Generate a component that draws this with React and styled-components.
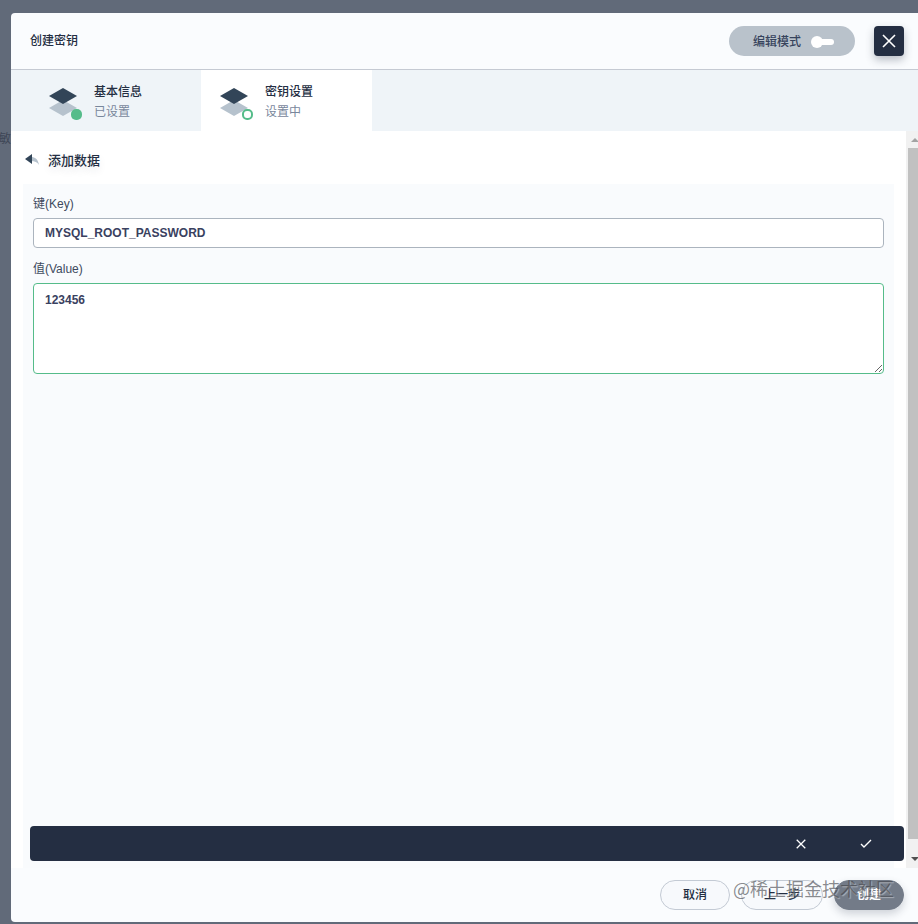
import React, { useState } from 'react';

// STYLE
import styled, { createGlobalStyle } from 'styled-components';

const GlobalStyle = createGlobalStyle`
    * {
        box-sizing: border-box;
    }
    body {
        margin: 0;
        background-color: #616a79;
        color: #242e42;
        font-family: 'Liberation Sans', 'Noto Sans CJK SC', sans-serif;
        font-size: 12px;
        line-height: 20px;
    }
    button,
    input,
    textarea {
        font: inherit;
        color: inherit;
    }
    button {
        padding: 0;
        border: none;
        cursor: pointer;
    }
    svg {
        display: block;
        flex-shrink: 0;
    }
`;

const Backdrop = styled.div`
    position: relative;
    display: flex;
    min-height: 100vh;
    padding: 13px 0 2px 11px;
    overflow: hidden;
`;

const BehindText = styled.span`
    position: absolute;
    top: 129px;
    left: -1px;
    color: #3e4656;
`;

const Modal = styled.div`
    position: relative;
    flex: 1;
    display: flex;
    flex-direction: column;
    min-width: 0;
    background-color: #fafcfe;
    border-radius: 4px 0 0 4px;
    overflow: hidden;
`;

const Header = styled.header`
    display: flex;
    align-items: center;
    height: 57px;
    padding: 0 14px 0 19px;
    border-bottom: 1px solid #c5cad3;
    h1 {
        flex: 1;
        margin: 0;
        font-size: 12px;
        font-weight: 500;
    }
`;

const ModeSwitch = styled.button`
    display: flex;
    align-items: center;
    gap: 10px;
    width: 126px;
    height: 30px;
    margin-right: 19px;
    padding: 1px 0 0 24px;
    border-radius: 15px;
    background-color: #b9c2cb;
    color: #36435c;
    font-weight: 500;
`;

const CloseButton = styled.button`
    display: flex;
    align-items: center;
    justify-content: center;
    width: 30px;
    height: 30px;
    border-radius: 4px;
    background-color: #242e42;
    box-shadow: 0 4px 8px rgba(36, 46, 66, 0.3);
`;

const Tabs = styled.nav`
    display: flex;
    height: 61px;
    padding-left: 19px;
    background-color: #eff4f8;
`;

const Tab = styled.button`
    display: flex;
    align-items: center;
    gap: 11px;
    width: 171px;
    padding: 2px 0 0 19px;
    background-color: ${({ $active }) => ($active ? '#ffffff' : 'transparent')};
    text-align: left;
    strong,
    small {
        display: block;
        font-size: 12px;
    }
    strong {
        font-weight: 500;
    }
    small {
        color: #79879c;
    }
`;

const Body = styled.div`
    flex: 1;
    display: flex;
    min-height: 0;
`;

const Content = styled.main`
    position: relative;
    flex: 1;
    display: flex;
    flex-direction: column;
    min-width: 0;
    padding: 0 12px;
    background-color: #ffffff;
`;

const SubHeader = styled.div`
    display: flex;
    align-items: center;
    gap: 9px;
    height: 53px;
    padding: 7px 0 0 2px;
    h2 {
        margin: 0;
        font-size: 13px;
        font-weight: 500;
        text-shadow: 0 4px 8px rgba(36, 46, 66, 0.1);
    }
`;

const BackButton = styled.button`
    background: none;
`;

const Form = styled.form`
    flex: 1;
    padding: 10px 10px 52px;
    background-color: #f9fbfd;
`;

const Field = styled.div`
    margin-bottom: 11px;
    label {
        display: block;
        height: 24px;
        color: #404a5e;
    }
    input,
    textarea {
        display: block;
        width: 100%;
        border-radius: 4px;
        outline: none;
        background-color: #ffffff;
        color: #3a4160;
        font-weight: 700;
    }
    input {
        height: 30px;
        padding: 0 11px;
        border: 1px solid #abb4be;
    }
    textarea {
        height: 91px;
        padding: 6px 11px;
        border: 1px solid #55bc8a;
        resize: vertical;
    }
`;

const ConfirmBar = styled.div`
    position: absolute;
    right: 2px;
    bottom: 7px;
    left: 19px;
    display: flex;
    align-items: center;
    justify-content: flex-end;
    gap: 52px;
    height: 35px;
    padding-right: 30px;
    border-radius: 4px;
    background-color: #242e42;
    button {
        background: none;
    }
`;

const ScrollTrack = styled.div`
    display: flex;
    flex-direction: column;
    width: 12px;
    padding-left: 2px;
    overflow: hidden;
    background-color: #f1f1f1;
`;

const ScrollThumb = styled.div`
    flex: 1;
    width: 17px;
    background-color: #c1c1c1;
`;

const ScrollEnd = styled.div`
    height: 12px;
`;

const Footer = styled.footer`
    position: relative;
    display: flex;
    align-items: center;
    justify-content: flex-end;
    gap: 11px;
    height: 54px;
    padding-right: 14px;
`;

const FooterButton = styled.button`
    min-width: 70px;
    height: 30px;
    padding: 0 22px;
    border: 1px solid ${({ $primary }) => ($primary ? '#737b88' : '#c3cad4')};
    border-radius: 15px;
    background-color: ${({ $primary }) => ($primary ? '#737b88' : '#f7f9fc')};
    box-shadow: ${({ $primary }) =>
        $primary ? '0 4px 8px rgba(36, 46, 66, 0.2)' : 'none'};
    color: ${({ $primary }) => ($primary ? '#ffffff' : '#242e42')};
    font-weight: ${({ $primary }) => ($primary ? 700 : 500)};
`;

const Watermark = styled.span`
    position: absolute;
    top: 8px;
    right: 24px;
    color: rgba(60, 62, 68, 0.6);
    font-family: 'Noto Sans CJK SC', sans-serif;
    font-size: 18px;
    line-height: 24px;
    text-shadow: 1px 1px 1px rgba(255, 255, 255, 0.4);
    pointer-events: none;
`;

const LayersIcon = ({ done }) => (
    <svg width="34" height="36" viewBox="0 0 34 36" aria-hidden="true">
        <path d="M14 16 28 24 14 32 0 24Z" fill="#b6c2cd" />
        <path d="M14 4 28 12 14 20 0 12Z" fill="#324558" />
        {done ? (
            <rect x="22" y="25" width="11" height="11" rx="5" fill="#55bc8a" />
        ) : (
            <rect
                x="23"
                y="26"
                width="9"
                height="9"
                rx="4"
                fill="#ffffff"
                stroke="#55bc8a"
                strokeWidth="2"
            />
        )}
    </svg>
);

const CrossIcon = ({ size, strokeWidth }) => (
    <svg width={size} height={size} viewBox="0 0 14 14" aria-hidden="true">
        <path
            d="M1 1 13 13M13 1 1 13"
            fill="none"
            stroke="#ffffff"
            strokeWidth={strokeWidth}
        />
    </svg>
);

const App = () => {
    const [key, setKey] = useState('MYSQL_ROOT_PASSWORD');
    const [value, setValue] = useState('123456');

    return (
        <>
            <GlobalStyle />
            <Backdrop>
                <BehindText>敏</BehindText>
                <Modal role="dialog" aria-labelledby="modal-title">
                    <Header>
                        <h1 id="modal-title">创建密钥</h1>
                        <ModeSwitch type="button" aria-pressed="false">
                            编辑模式
                            <svg width="24" height="12" viewBox="0 0 24 12" aria-hidden="true">
                                <rect x="6" y="3" width="17" height="6" rx="3" fill="#ffffff" />
                                <circle cx="6" cy="6" r="6" fill="#ffffff" />
                            </svg>
                        </ModeSwitch>
                        <CloseButton type="button" aria-label="关闭">
                            <CrossIcon size={14} strokeWidth={1.6} />
                        </CloseButton>
                    </Header>
                    <Tabs>
                        <Tab type="button">
                            <LayersIcon done />
                            <span>
                                <strong>基本信息</strong>
                                <small>已设置</small>
                            </span>
                        </Tab>
                        <Tab type="button" $active>
                            <LayersIcon />
                            <span>
                                <strong>密钥设置</strong>
                                <small>设置中</small>
                            </span>
                        </Tab>
                    </Tabs>
                    <Body>
                        <Content>
                            <SubHeader>
                                <BackButton type="button" aria-label="返回">
                                    <svg width="14" height="14" viewBox="0 0 14 14" aria-hidden="true">
                                        <path
                                            d="M6 3C10 3 13 5 14 11 12 8 10 7 6 7Z"
                                            fill="#b6c2cd"
                                        />
                                        <path d="M0 5 7 0V10Z" fill="#324558" />
                                    </svg>
                                </BackButton>
                                <h2>添加数据</h2>
                            </SubHeader>
                            <Form onSubmit={(e) => e.preventDefault()}>
                                <Field>
                                    <label htmlFor="secret-key">键(Key)</label>
                                    <input
                                        id="secret-key"
                                        value={key}
                                        onChange={(e) => setKey(e.target.value)}
                                    />
                                </Field>
                                <Field>
                                    <label htmlFor="secret-value">值(Value)</label>
                                    <textarea
                                        id="secret-value"
                                        value={value}
                                        onChange={(e) => setValue(e.target.value)}
                                    />
                                </Field>
                            </Form>
                            <ConfirmBar>
                                <button type="button" aria-label="取消编辑">
                                    <CrossIcon size={10} strokeWidth={1.8} />
                                </button>
                                <button type="button" aria-label="确定">
                                    <svg width="16" height="16" viewBox="0 0 16 16" aria-hidden="true">
                                        <path
                                            d="M3 8 6 11 13 4"
                                            fill="none"
                                            stroke="#ffffff"
                                            strokeWidth="1.4"
                                        />
                                    </svg>
                                </button>
                            </ConfirmBar>
                        </Content>
                        <ScrollTrack aria-hidden="true">
                            <svg width="17" height="17" viewBox="0 0 17 17">
                                <path d="M3 11 7 7 11 11Z" fill="#a3a3a3" />
                            </svg>
                            <ScrollThumb />
                            <ScrollEnd />
                            <svg width="17" height="17" viewBox="0 0 17 17">
                                <path d="M3 6 7 10 11 6Z" fill="#505050" />
                            </svg>
                        </ScrollTrack>
                    </Body>
                    <Footer>
                        <FooterButton type="button">取消</FooterButton>
                        <FooterButton type="button">上一步</FooterButton>
                        <FooterButton type="button" $primary>
                            创建
                        </FooterButton>
                        <Watermark>@稀土掘金技术社区</Watermark>
                    </Footer>
                </Modal>
            </Backdrop>
        </>
    );
};

export default App;
